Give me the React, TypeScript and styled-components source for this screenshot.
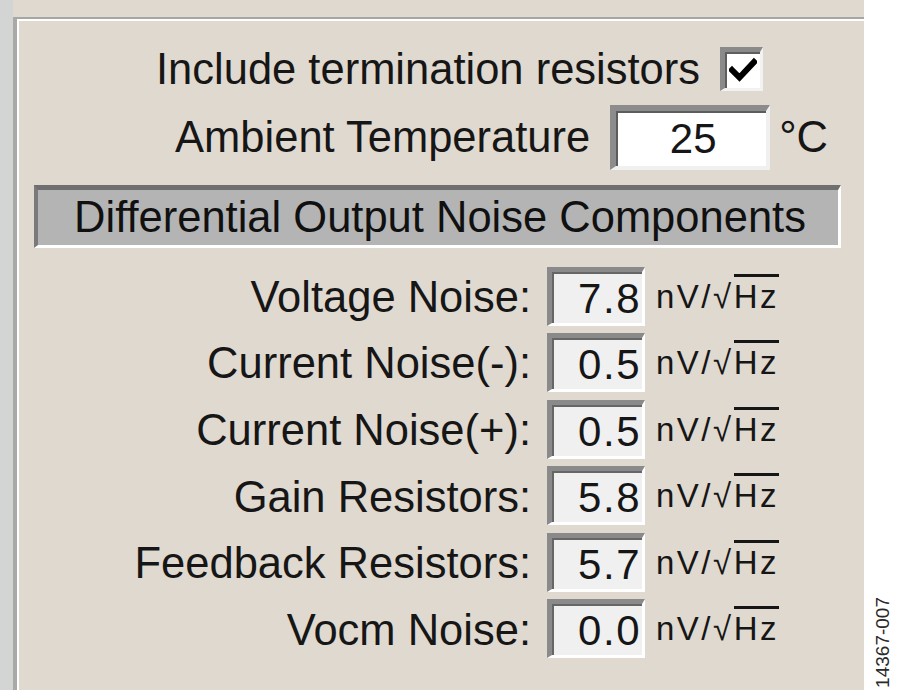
import React from "react";
import styled, { createGlobalStyle } from "styled-components";

const Global = createGlobalStyle`
  html, body { margin: 0; padding: 0; background: #ffffff; }
  body { font-family: "Liberation Sans", Arial, sans-serif; }
`;

const Page = styled.div`
  display: flex;
  width: 900px;
  height: 693px;
  background: #ffffff;
`;

const Window = styled.div`
  display: flex;
  width: 864px;
  height: 690px;
`;

const LeftStrip = styled.div`
  width: 13px;
  background: #d3d5d5;
`;

const Panel = styled.div`
  flex: 1;
  display: flex;
  flex-direction: column;
  padding-top: 17px;
  background: #e0d9d0;
`;

const GroupBox = styled.div`
  flex: 1;
  display: flex;
  flex-direction: column;
  border-top: 2px solid #a6a6a4;
  border-left: 4px solid #a9a9a7;
  box-shadow: inset 2px 2px 0 #ffffff;
  padding-top: 27px;
  color: #161616;
  font-size: 43.5px;
  letter-spacing: 0;
`;

const Line = styled.div<{ $right: number; $top?: number }>`
  display: flex;
  align-items: center;
  justify-content: flex-end;
  padding-right: ${(p) => p.$right}px;
  margin-top: ${(p) => p.$top ?? 0}px;
  gap: 20px;
`;

const Label = styled.span`
  white-space: nowrap;
  line-height: 1;
  padding-top: 2px;
`;

const CheckBox = styled.div`
  width: 43px;
  height: 44px;
  box-sizing: border-box;
  background: #ffffff;
  border-top: 5px solid #8a8a8a;
  border-left: 5px solid #8a8a8a;
  border-right: 3px solid #f2f2f2;
  border-bottom: 3px solid #f2f2f2;
  box-shadow: inset 2px 2px 0 #5e5e5e;
  display: flex;
  align-items: center;
  justify-content: center;
`;

const TempInput = styled.div`
  width: 160px;
  height: 65px;
  box-sizing: border-box;
  background: #ffffff;
  border-top: 6px solid #8c8c8c;
  border-left: 6px solid #8c8c8c;
  border-right: 4px solid #f0f0f0;
  border-bottom: 4px solid #f0f0f0;
  box-shadow: inset 2px 2px 0 #5c5c5c;
  display: flex;
  align-items: center;
  justify-content: center;
  line-height: 1;
  padding-top: 2px;
  padding-left: 4px;
  font-size: 42px;
`;

const Unit = styled.span`
  line-height: 1;
  margin-left: -11px;
  padding-top: 2px;
`;

const Header = styled.div`
  margin: 15px 23px 0 17px;
  height: 63px;
  box-sizing: border-box;
  background: #b4b4b4;
  border-top: 5px solid #6f6f6f;
  border-left: 4px solid #7a7a7a;
  border-right: 3px solid #ffffff;
  border-bottom: 3px solid #ffffff;
  display: flex;
  align-items: center;
  justify-content: center;
  line-height: 1;
  color: #101010;
  padding-top: 2px;
  padding-left: 4px;
`;

const NoiseGrid = styled.div`
  display: grid;
  grid-template-columns: 514px 98px auto;
  grid-auto-rows: 59px;
  row-gap: 7.6px;
  column-gap: 16px;
  margin-top: 19px;
  align-items: center;
`;

const NoiseLabel = styled.span`
  justify-self: end;
  white-space: nowrap;
  line-height: 1;
  padding-top: 3px;
`;

const ValueBox = styled.div`
  height: 59px;
  box-sizing: border-box;
  background: #f0f0f0;
  border-top: 5px solid #8a8a8a;
  border-left: 5px solid #8a8a8a;
  border-right: 3px solid #ffffff;
  border-bottom: 3px solid #ffffff;
  box-shadow: inset 2px 2px 0 #666666;
  display: flex;
  align-items: center;
  justify-content: flex-end;
  padding-right: 1px;
  padding-top: 3px;
  line-height: 1;
  font-size: 42px;
  letter-spacing: 1.5px;
`;

const UnitText = styled.span`
  font-size: 33px;
  letter-spacing: 2.5px;
  line-height: 1;
  white-space: nowrap;
  margin-left: -5px;
`;

const Radicand = styled.span`
  border-top: 3px solid #161616;
  padding-top: 1px;
`;

const Side = styled.div`
  flex: 1;
  display: flex;
  align-items: flex-end;
  justify-content: center;
  padding-bottom: 5px;
`;

const FigureId = styled.span`
  writing-mode: vertical-rl;
  transform: rotate(180deg);
  font-family: "Liberation Sans", Arial, sans-serif;
  font-size: 19px;
  color: #2a2a2a;
  line-height: 1;
`;

const rows: [string, string][] = [
  ["Voltage Noise:", "7.8"],
  ["Current Noise(-):", "0.5"],
  ["Current Noise(+):", "0.5"],
  ["Gain Resistors:", "5.8"],
  ["Feedback Resistors:", "5.7"],
  ["Vocm Noise:", "0.0"],
];

export default function App() {
  return (
    <>
      <Global />
      <Page>
        <Window>
          <LeftStrip />
          <Panel>
            <GroupBox>
              <Line $right={101}>
                <Label>Include termination resistors</Label>
                <CheckBox>
                  <svg width="28" height="26" viewBox="0 0 28 26">
                    <path d="M3 13 L10.5 20.5 L25 5" fill="none" stroke="#000" strokeWidth="6" strokeLinecap="square" strokeLinejoin="miter" />
                  </svg>
                </CheckBox>
              </Line>
              <Line $right={36} $top={13}>
                <Label>Ambient Temperature</Label>
                <TempInput>25</TempInput>
                <Unit>°C</Unit>
              </Line>
              <Header>Differential Output Noise Components</Header>
              <NoiseGrid>
                {rows.map(([label, value]) => (
                  <React.Fragment key={label}>
                    <NoiseLabel>{label}</NoiseLabel>
                    <ValueBox>{value}</ValueBox>
                    <UnitText>
                      nV/√<Radicand>Hz</Radicand>
                    </UnitText>
                  </React.Fragment>
                ))}
              </NoiseGrid>
            </GroupBox>
          </Panel>
        </Window>
        <Side>
          <FigureId>14367-007</FigureId>
        </Side>
      </Page>
    </>
  );
}
